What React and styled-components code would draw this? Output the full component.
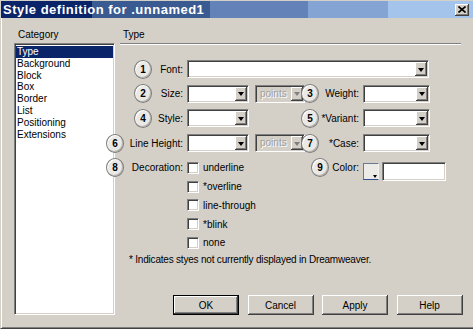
import React from "react";
import styled, { createGlobalStyle } from "styled-components";

const GlobalStyle = createGlobalStyle`
  html, body {
    margin: 0;
    padding: 0;
    background: #d4d0c8;
  }
  body {
    font-family: "Liberation Sans", Arial, sans-serif;
    font-size: 10px;
    color: #000;
  }
  * {
    box-sizing: border-box;
  }
`;

const categories = [
  "Type",
  "Background",
  "Block",
  "Box",
  "Border",
  "List",
  "Positioning",
  "Extensions",
];

const decorations = ["underline", "*overline", "line-through", "*blink", "none"];

export default function App() {
  return (
    <Window>
      <GlobalStyle />
      <TitleBar>
        <TitleText>Style definition for .unnamed1</TitleText>
        <CloseButton>
          <svg width="8" height="7" viewBox="0 0 8 7">
            <path d="M0.5 0.5 L7.5 6.5 M7.5 0.5 L0.5 6.5" stroke="#000" strokeWidth="1.6" />
          </svg>
        </CloseButton>
      </TitleBar>

      <Body>
        <LeftColumn>
          <Heading>Category</Heading>
          <ListBox>
            {categories.map((c, i) => (
              <ListItem key={c} $selected={i === 0}>
                {c}
              </ListItem>
            ))}
          </ListBox>
        </LeftColumn>

        <RightColumn>
          <Heading $indent={3}>Type</Heading>
          <Groove />

          <FormGrid>
            {/* row 1 */}
            <LabelGroup>
              <Badge $offset={28}>1</Badge>
              <LabelText>Font:</LabelText>
            </LabelGroup>
            <FieldCell $span={3}>
              <Combo width={242} />
            </FieldCell>

            {/* row 2 */}
            <LabelGroup>
              <Badge $offset={28}>2</Badge>
              <LabelText>Size:</LabelText>
            </LabelGroup>
            <FieldCell>
              <Combo width={62} />
              <Combo width={50} disabled value="points" />
            </FieldCell>
            <LabelGroup>
              <Badge $offset={0}>3</Badge>
              <LabelText>Weight:</LabelText>
            </LabelGroup>
            <FieldCell>
              <Combo width={67} />
            </FieldCell>

            {/* row 3 */}
            <LabelGroup>
              <Badge $offset={28}>4</Badge>
              <LabelText>Style:</LabelText>
            </LabelGroup>
            <FieldCell>
              <Combo width={62} />
            </FieldCell>
            <LabelGroup>
              <Badge $offset={0}>5</Badge>
              <LabelText>*Variant:</LabelText>
            </LabelGroup>
            <FieldCell>
              <Combo width={67} />
            </FieldCell>

            {/* row 4 */}
            <LabelGroup>
              <Badge $offset={0}>6</Badge>
              <LabelText>Line Height:</LabelText>
            </LabelGroup>
            <FieldCell>
              <Combo width={62} />
              <Combo width={50} disabled value="points" />
            </FieldCell>
            <LabelGroup>
              <Badge $offset={0}>7</Badge>
              <LabelText>*Case:</LabelText>
            </LabelGroup>
            <FieldCell>
              <Combo width={67} />
            </FieldCell>

            {/* row 5 */}
            <LabelGroup $top>
              <Badge $offset={0}>8</Badge>
              <LabelText>Decoration:</LabelText>
            </LabelGroup>
            <CheckList>
              {decorations.map((d) => (
                <CheckRow key={d}>
                  <CheckBox />
                  <span>{d}</span>
                </CheckRow>
              ))}
            </CheckList>
            <LabelGroup $top>
              <Badge $offset={10}>9</Badge>
              <LabelText>Color:</LabelText>
            </LabelGroup>
            <ColorCell>
              <Swatch />
              <TextBox $w={64} />
            </ColorCell>
          </FormGrid>

          <Note>* Indicates styes not currently displayed in Dreamweaver.</Note>

          <ButtonRow>
            <Button $default>OK</Button>
            <Button>Cancel</Button>
            <Button>Apply</Button>
            <Button>Help</Button>
          </ButtonRow>
        </RightColumn>
      </Body>
    </Window>
  );
}

function Combo({ width, disabled, value }) {
  return (
    <ComboBox $w={width} $disabled={disabled}>
      <ComboValue $disabled={disabled}>{value}</ComboValue>
      <DropButton $disabled={disabled} />
    </ComboBox>
  );
}

const Window = styled.div`
  width: 473px;
  height: 329px;
  display: flex;
  flex-direction: column;
  background: #d4d0c8;
  border-top: 1px solid #d4d0c8;
  border-left: 1px solid #d4d0c8;
  border-bottom: 1px solid #404040;
  box-shadow: inset 1px 0 #fff, inset 0 -1px #808080;
`;

const TitleBar = styled.div`
  height: 17px;
  flex-shrink: 0;
  display: flex;
  align-items: center;
  padding-left: 2px;
  background: linear-gradient(
    to right,
    #0a246a 0 91px,
    #3a5a92 91px 209px,
    #6282b8 209px 307px,
    #84a4d4 307px 387px,
    #a4c4ec 387px
  );
`;

const TitleText = styled.div`
  color: #fff;
  font-size: 13px;
  font-weight: bold;
  letter-spacing: 0.5px;
  line-height: 17px;
  white-space: nowrap;
`;

const CloseButton = styled.div`
  margin-left: auto;
  margin-right: 4px;
  width: 14px;
  height: 12px;
  display: flex;
  align-items: center;
  justify-content: center;
  background: #d4d0c8;
  box-shadow: inset -1px -1px #404040, inset 1px 1px #fff, inset -2px -2px #808080;
`;

const Body = styled.div`
  flex: 1;
  display: flex;
  gap: 5px;
  padding: 11px 10px 13px 13px;
`;

const LeftColumn = styled.div`
  width: 101px;
  display: flex;
  flex-direction: column;
`;

const RightColumn = styled.div`
  flex: 1;
  display: flex;
  flex-direction: column;
`;

const Heading = styled.div`
  height: 12px;
  line-height: 12px;
  padding-left: ${(p) => p.$indent || 4}px;
`;

const ListBox = styled.ul`
  flex: 1;
  margin: 2px 0 0;
  padding: 2px 1px;
  list-style: none;
  background: #fff;
  border: 1px solid;
  border-color: #808080 #fff #fff #808080;
  box-shadow: inset 1px 1px #404040, inset -1px -1px #d4d0c8;
`;

const ListItem = styled.li`
  height: 11.8px;
  line-height: 11.8px;
  padding-left: 1px;
  white-space: nowrap;
  background: ${(p) => (p.$selected ? "#0a246a" : "transparent")};
  color: ${(p) => (p.$selected ? "#fff" : "#000")};
`;

const Groove = styled.div`
  margin: 2px 2px 0 0;
  height: 2px;
  border-top: 1px solid #808080;
  border-bottom: 1px solid #fff;
`;

const FormGrid = styled.div`
  margin: 12px 0 0 -14px;
  display: grid;
  grid-template-columns: 81px 114px 62px 1fr;
  grid-template-rows: repeat(4, 24.6px) auto;
`;

const LabelGroup = styled.div`
  display: flex;
  align-items: center;
  align-self: ${(p) => (p.$top ? "start" : "stretch")};
  margin-top: ${(p) => (p.$top ? "3px" : "0")};
  height: ${(p) => (p.$top ? "18.75px" : "auto")};
  padding-right: 4px;
`;

const Badge = styled.div`
  position: relative;
  z-index: 1;
  flex-shrink: 0;
  margin-left: ${(p) => p.$offset}px;
  width: 18px;
  height: 19px;
  border-radius: 50%;
  border: 1px solid #7c7c7c;
  background: #ebe9e5;
  box-shadow: inset 1px 1px #fff, inset -1px -1px #b8b5ae;
  display: flex;
  align-items: center;
  justify-content: center;
  font-size: 10px;
  font-weight: bold;
`;

const LabelText = styled.span`
  flex: 1;
  text-align: right;
  white-space: nowrap;
`;

const FieldCell = styled.div`
  grid-column: span ${(p) => p.$span || 1};
  display: flex;
  align-items: center;
  gap: 6px;
`;

const ComboBox = styled.div`
  flex-shrink: 0;
  width: ${(p) => p.$w}px;
  height: 18px;
  display: flex;
  padding: 1px;
  background: ${(p) => (p.$disabled ? "#d4d0c8" : "#fff")};
  border: 1px solid;
  border-color: #808080 #fff #fff #808080;
  box-shadow: inset 1px 1px #404040, inset -1px -1px #d4d0c8;
`;

const ComboValue = styled.span`
  flex: 1;
  line-height: 14px;
  padding-left: 3px;
  color: ${(p) => (p.$disabled ? "#a0a0a0" : "#000")};
  text-shadow: ${(p) => (p.$disabled ? "1px 1px #fff" : "none")};
  overflow: hidden;
  white-space: nowrap;
`;

const DropButton = styled.span`
  width: 12px;
  height: 14px;
  flex-shrink: 0;
  display: flex;
  align-items: center;
  justify-content: center;
  background: #d4d0c8;
  box-shadow: inset -1px -1px #404040, inset 1px 1px #fff, inset -2px -2px #808080;

  &::after {
    content: "";
    margin: 1px 1px 0 0;
    border-left: 3.5px solid transparent;
    border-right: 3.5px solid transparent;
    border-top: 4px solid ${(p) => (p.$disabled ? "#808080" : "#000")};
  }
`;

const CheckList = styled.div`
  padding-top: 3px;
  display: flex;
  flex-direction: column;
`;

const CheckRow = styled.label`
  height: 18.75px;
  display: flex;
  align-items: center;
  gap: 4px;
  white-space: nowrap;
`;

const CheckBox = styled.span`
  width: 12px;
  height: 12px;
  background: #fff;
  border: 1px solid;
  border-color: #808080 #fff #fff #808080;
  box-shadow: inset 1px 1px #404040, inset -1px -1px #d4d0c8;
`;

const ColorCell = styled.div`
  align-self: start;
  margin-top: 7px;
  display: flex;
  align-items: center;
  gap: 3px;
`;

const Swatch = styled.div`
  position: relative;
  width: 16px;
  height: 17px;
  background: #ecebe8;
  border: 1px solid;
  border-color: #6a7890 #f4f4f4 #2e4f8c #6a7890;

  &::after {
    content: "";
    position: absolute;
    right: 1px;
    bottom: 1px;
    border-left: 2.5px solid transparent;
    border-right: 2.5px solid transparent;
    border-top: 3px solid #000;
  }
`;

const TextBox = styled.div`
  width: ${(p) => p.$w}px;
  height: 19px;
  background: #fff;
  border: 1px solid;
  border-color: #808080 #fff #fff #808080;
  box-shadow: inset 1px 1px #404040, inset -1px -1px #d4d0c8;
`;

const Note = styled.div`
  margin: 2px 0 0 9px;
  line-height: 12px;
  letter-spacing: -0.2px;
  white-space: nowrap;
`;

const ButtonRow = styled.div`
  margin-top: auto;
  padding-left: 53px;
  display: flex;
  gap: 8.5px;
`;

const Button = styled.button`
  width: 66px;
  height: 20px;
  padding: 0;
  font: inherit;
  font-size: 10px;
  color: #000;
  background: #d4d0c8;
  border: ${(p) => (p.$default ? "1px solid #000" : "none")};
  box-shadow: inset -1px -1px #404040, inset 1px 1px #fff, inset -2px -2px #808080;
`;
